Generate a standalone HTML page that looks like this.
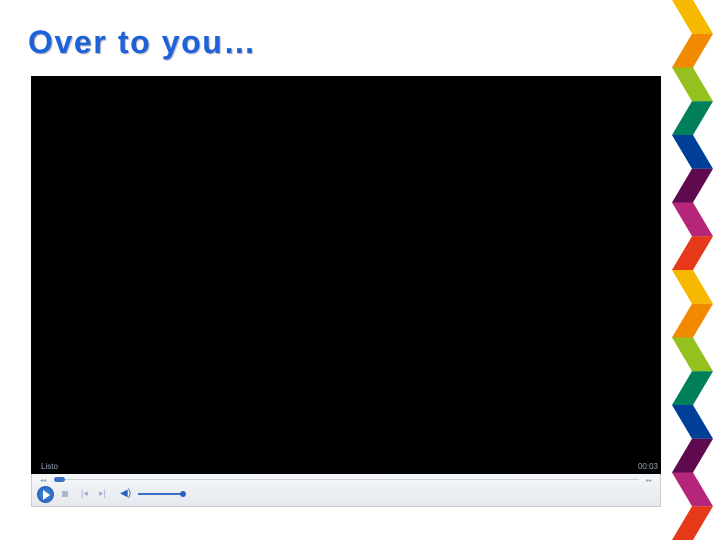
<!DOCTYPE html>
<html><head><style>
body{margin:0;width:720px;height:540px;background:#fff;position:relative;overflow:hidden;font-family:"Liberation Sans",sans-serif}
h1{position:absolute;left:28px;top:24px;margin:0;font-size:32px;font-weight:bold;color:#1d62d8;text-shadow:1px 1px 1px #aab;letter-spacing:1.6px}
.vid{position:absolute;left:31px;top:76px;width:630px;height:398px;background:#000}
.vid span{position:absolute;bottom:3px;font-size:8px;color:#9ab}
.bar{position:absolute;left:31px;top:474px;width:628px;height:32px;background:linear-gradient(#f4f6f8,#e6eaee);border:1px solid #c8ccd0;border-top:none}
</style></head><body>
<h1>Over to you…</h1>
<div class="vid"><span style="left:10px">Listo</span><span style="right:3px">00:03</span></div>
<div class="bar">
<div style="position:absolute;left:22px;top:5px;width:585px;height:1px;background:#c9d0d8"></div>
<div style="position:absolute;left:22px;top:3px;width:11px;height:5px;border-radius:3px;background:#3a6fc8"></div>
<div style="position:absolute;left:8px;top:3px;font-size:6px;color:#8ab">◂◂</div>
<div style="position:absolute;right:8px;top:3px;font-size:6px;color:#8ab">▸▸</div>
<div style="position:absolute;left:5px;top:12px;width:17px;height:17px;border-radius:50%;background:radial-gradient(#4a8fe8,#1b4fa8)"></div>
<div style="position:absolute;left:11px;top:16px;width:0;height:0;border-left:7px solid #fff;border-top:5px solid transparent;border-bottom:5px solid transparent"></div>
<div style="position:absolute;left:30px;top:17px;width:6px;height:6px;background:#aab8cc"></div>
<div style="position:absolute;left:49px;top:14px;font-size:9px;color:#9ab0cc">|◂</div>
<div style="position:absolute;left:67px;top:14px;font-size:9px;color:#9ab0cc">▸|</div>
<div style="position:absolute;left:88px;top:14px;font-size:10px;color:#2a5fc0">◀)</div>
<div style="position:absolute;left:106px;top:19px;width:46px;height:2px;background:#3a6fc8"></div>
<div style="position:absolute;left:148px;top:17px;width:6px;height:6px;border-radius:50%;background:#2a5fc0"></div>
</div>
<svg style="position:absolute;left:0;top:0" width="720" height="540">
<polygon points="672,0 693,0 713,33.75 692,33.75" fill="#f7b900"/>
<polygon points="692,33.75 713,33.75 693,67.5 672,67.5" fill="#f18a00"/>
<polygon points="672,67.5 693,67.5 713,101.25 692,101.25" fill="#95c11f"/>
<polygon points="692,101.25 713,101.25 693,135 672,135" fill="#00805a"/>
<polygon points="672,135 693,135 713,168.75 692,168.75" fill="#003f98"/>
<polygon points="692,168.75 713,168.75 693,202.5 672,202.5" fill="#5f0a4e"/>
<polygon points="672,202.5 693,202.5 713,236.25 692,236.25" fill="#b5267a"/>
<polygon points="692,236.25 713,236.25 693,270 672,270" fill="#e5391a"/>
<polygon points="672,270 693,270 713,303.75 692,303.75" fill="#f7b900"/>
<polygon points="692,303.75 713,303.75 693,337.5 672,337.5" fill="#f18a00"/>
<polygon points="672,337.5 693,337.5 713,371.25 692,371.25" fill="#95c11f"/>
<polygon points="692,371.25 713,371.25 693,405 672,405" fill="#00805a"/>
<polygon points="672,405 693,405 713,438.75 692,438.75" fill="#003f98"/>
<polygon points="692,438.75 713,438.75 693,472.5 672,472.5" fill="#5f0a4e"/>
<polygon points="672,472.5 693,472.5 713,506.25 692,506.25" fill="#b5267a"/>
<polygon points="692,506.25 713,506.25 693,540 672,540" fill="#e5391a"/>
</svg>
</body></html>
